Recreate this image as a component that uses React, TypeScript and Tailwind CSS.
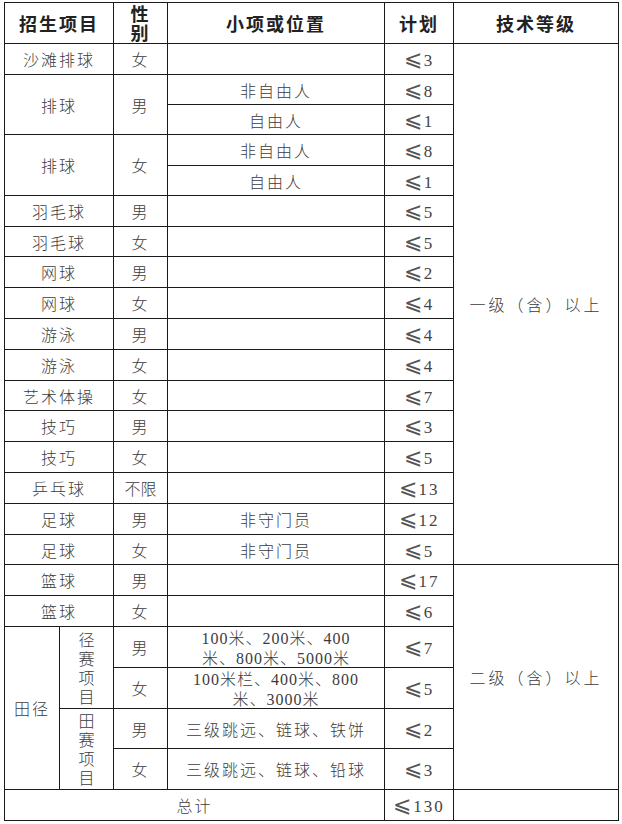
import React from "react";

const cell = "border border-[#1a1a1a] text-center align-middle p-0 leading-[20px]";
const num = "font-['Liberation_Serif','DejaVu_Serif','Noto_Sans_CJK_SC',serif] text-[17px] leading-none text-[#444]";
const dig = "font-['Liberation_Serif','DejaVu_Serif','Noto_Sans_CJK_SC',serif] text-[16px] leading-none tracking-[1px]";

function Le({ n }: { n: string }) {
  return (
    <span className={num}>
      <span className="font-['DejaVu_Sans','Noto_Sans_CJK_SC',sans-serif] text-[22px] leading-none text-[#555]">⩽</span>
      {n}
    </span>
  );
}

type SimpleRow = { name: string; sex: string; item?: string; plan: string; h: string };

const simpleRows: SimpleRow[] = [
  { name: "羽毛球", sex: "男", plan: "5", h: "h-[31px]" },
  { name: "羽毛球", sex: "女", plan: "5", h: "h-[30px]" },
  { name: "网球", sex: "男", plan: "2", h: "h-[31px]" },
  { name: "网球", sex: "女", plan: "4", h: "h-[31px]" },
  { name: "游泳", sex: "男", plan: "4", h: "h-[31px]" },
  { name: "游泳", sex: "女", plan: "4", h: "h-[31px]" },
  { name: "艺术体操", sex: "女", plan: "7", h: "h-[30px]" },
  { name: "技巧", sex: "男", plan: "3", h: "h-[31px]" },
  { name: "技巧", sex: "女", plan: "5", h: "h-[31px]" },
  { name: "乒乓球", sex: "不限", plan: "13", h: "h-[31px]" },
  { name: "足球", sex: "男", item: "非守门员", plan: "12", h: "h-[31px]" },
  { name: "足球", sex: "女", item: "非守门员", plan: "5", h: "h-[30px]" },
];

function Vert({ text }: { text: string }) {
  return (
    <div className="flex flex-col items-center leading-[19px] pl-[2px]">
      {text.split("").map((c, i) => (
        <span key={i} className="block h-[19px]">{c}</span>
      ))}
    </div>
  );
}

export default function App() {
  return (
    <div className="bg-white w-[622px] h-[824px] pl-[4px] pt-[2px] font-['Noto_Sans_CJK_SC',sans-serif] text-[16px] text-[#3c3c3c] font-light tracking-[2px]">
      <table className="border-collapse table-fixed w-[614px]">
        <colgroup>
          <col className="w-[55px]" />
          <col className="w-[54px]" />
          <col className="w-[54px]" />
          <col className="w-[217px]" />
          <col className="w-[69px]" />
          <col className="w-[165px]" />
        </colgroup>
        <tbody>
          <tr className="h-[41px] text-[18px] font-bold text-[#222]">
            <td colSpan={2} className={cell}>招生项目</td>
            <td className={cell + " !leading-[19px]"}>
              性<br />别
            </td>
            <td className={cell}>小项或位置</td>
            <td className={cell}>计划</td>
            <td className={cell}>技术等级</td>
          </tr>
          <tr className="h-[31px]">
            <td colSpan={2} className={cell}>沙滩排球</td>
            <td className={cell}>女</td>
            <td className={cell}></td>
            <td className={cell}><Le n="3" /></td>
            <td rowSpan={17} className={cell + " tracking-[3px]"}>一级（含）以上</td>
          </tr>
          <tr className="h-[30px]">
            <td colSpan={2} rowSpan={2} className={cell}>排球</td>
            <td rowSpan={2} className={cell}>男</td>
            <td className={cell}>非自由人</td>
            <td className={cell}><Le n="8" /></td>
          </tr>
          <tr className="h-[30px]">
            <td className={cell}>自由人</td>
            <td className={cell}><Le n="1" /></td>
          </tr>
          <tr className="h-[31px]">
            <td colSpan={2} rowSpan={2} className={cell}>排球</td>
            <td rowSpan={2} className={cell}>女</td>
            <td className={cell}>非自由人</td>
            <td className={cell}><Le n="8" /></td>
          </tr>
          <tr className="h-[30px]">
            <td className={cell}>自由人</td>
            <td className={cell}><Le n="1" /></td>
          </tr>
          {simpleRows.map((r, i) => (
            <tr key={i} className={r.h}>
              <td colSpan={2} className={cell}>{r.name}</td>
              <td className={cell + (r.sex.length > 1 ? " tracking-[0px]" : "")}>{r.sex}</td>
              <td className={cell}>{r.item ?? ""}</td>
              <td className={cell}><Le n={r.plan} /></td>
            </tr>
          ))}
          <tr className="h-[31px]">
            <td colSpan={2} className={cell}>篮球</td>
            <td className={cell}>男</td>
            <td className={cell}></td>
            <td className={cell}><Le n="17" /></td>
            <td rowSpan={6} className={cell + " tracking-[3px]"}>二级（含）以上</td>
          </tr>
          <tr className="h-[31px]">
            <td colSpan={2} className={cell}>篮球</td>
            <td className={cell}>女</td>
            <td className={cell}></td>
            <td className={cell}><Le n="6" /></td>
          </tr>
          <tr className="h-[41px]">
            <td rowSpan={4} className={cell}>田径</td>
            <td rowSpan={2} className={cell}><Vert text="径赛项目" /></td>
            <td className={cell}>男</td>
            <td className={cell + " tracking-[1px]"}>
              <span className={dig}>100</span>米、<span className={dig}>200</span>米、<span className={dig}>400</span>
              <br />
              米、<span className={dig}>800</span>米、<span className={dig}>5000</span>米
            </td>
            <td className={cell}><Le n="7" /></td>
          </tr>
          <tr className="h-[41px]">
            <td className={cell}>女</td>
            <td className={cell + " tracking-[1px]"}>
              <span className={dig}>100</span>米栏、<span className={dig}>400</span>米、<span className={dig}>800</span>
              <br />
              米、<span className={dig}>3000</span>米
            </td>
            <td className={cell}><Le n="5" /></td>
          </tr>
          <tr className="h-[40px]">
            <td rowSpan={2} className={cell}><Vert text="田赛项目" /></td>
            <td className={cell}>男</td>
            <td className={cell}>三级跳远、链球、铁饼</td>
            <td className={cell}><Le n="2" /></td>
          </tr>
          <tr className="h-[41px]">
            <td className={cell}>女</td>
            <td className={cell}>三级跳远、链球、铅球</td>
            <td className={cell}><Le n="3" /></td>
          </tr>
          <tr className="h-[31px]">
            <td colSpan={4} className={cell}>总计</td>
            <td className={cell}><Le n="130" /></td>
            <td className={cell}></td>
          </tr>
        </tbody>
      </table>
    </div>
  );
}
